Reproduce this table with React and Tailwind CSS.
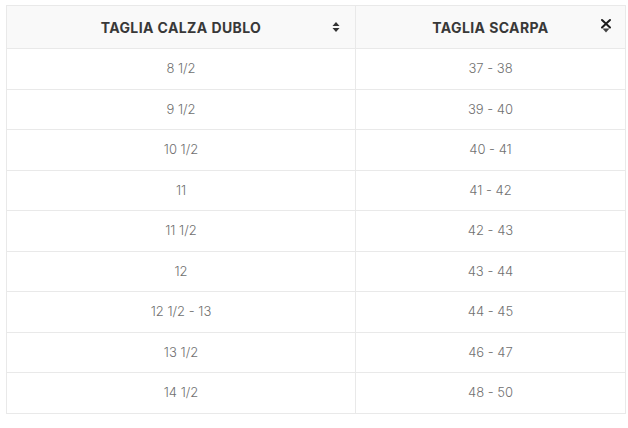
import React from "react";

const rows = [
  ["8 1/2", "37 - 38"],
  ["9 1/2", "39 - 40"],
  ["10 1/2", "40 - 41"],
  ["11", "41 - 42"],
  ["11 1/2", "42 - 43"],
  ["12", "43 - 44"],
  ["12 1/2 - 13", "44 - 45"],
  ["13 1/2", "46 - 47"],
  ["14 1/2", "48 - 50"],
];

const SortIcon = () => (
  <svg width="8" height="12" viewBox="0 0 8 12" className="block">
    <path d="M4 1 L7.5 5 H0.5 Z" fill="#333" />
    <path d="M4 11 L7.5 7 H0.5 Z" fill="#333" />
  </svg>
);

const SortOffIcon = () => (
  <svg width="12" height="16" viewBox="0 0 12 16" className="block">
    <path d="M6 14.5 L9.5 10.5 H2.5 Z" fill="#444" />
    <path d="M2 2 L10 9.5 M10 2 L2 9.5" stroke="#1a1a1a" strokeWidth="2" strokeLinecap="round" />
  </svg>
);

export default function App() {
  return (
    <div className="w-[628px] h-[428px] bg-white pt-[5px] pl-[6px]" style={{ fontFamily: "Inter, 'Noto Sans', sans-serif" }}>
      <table className="w-[620px] border-collapse border border-[#e9e9e9] table-fixed">
        <thead>
          <tr className="bg-[#f9f9f9] h-[43px]">
            <th className="relative w-[349px] border border-[#e9e9e9] text-[14px] font-bold text-[#383838] tracking-[0.4px]">
              TAGLIA CALZA DUBLO
              <span className="absolute right-[15px] top-[15px]">
                <SortIcon />
              </span>
            </th>
            <th className="relative border border-[#e9e9e9] text-[14px] font-bold text-[#383838] tracking-[0.4px]">
              TAGLIA SCARPA
              <span className="absolute right-[13px] top-[12px]">
                <SortOffIcon />
              </span>
            </th>
          </tr>
        </thead>
        <tbody>
          {rows.map(([a, b]) => (
            <tr key={a} className="h-[40.5px]">
              <td className="border border-[#e9e9e9] text-center text-[13px] text-[#707070] font-light">{a}</td>
              <td className="border border-[#e9e9e9] text-center text-[13px] text-[#707070] font-light">{b}</td>
            </tr>
          ))}
        </tbody>
      </table>
    </div>
  );
}
